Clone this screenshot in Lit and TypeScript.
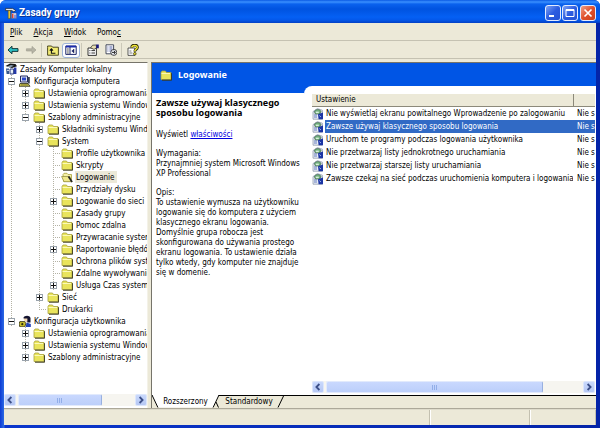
import { LitElement, html, css, svg, nothing } from 'lit';
import { customElement, property, state } from 'lit/decorators.js';
import { classMap } from 'lit/directives/class-map.js';

const folder = svg`
  <path d="M1 3.5 2 2h3.5l1 1.5H11v7H1z" fill="#e9e45c" stroke="#a8a23c" stroke-width=".8"/>
  <path d="M1.5 4.5H10" stroke="#fbf9b8"/>
  <path d="M2 11.2h9.6V4.2" fill="none" stroke="#3c3a1c" stroke-width="1"/>`;

const icons: Record<string, unknown> = {
  folder,
  open: svg`
    <path d="M2 3.5 3 2.3h3l1 1.2h3.5v7H2.5z" fill="#f4f0a6" stroke="#a8a23c" stroke-width=".8"/>
    <path d="M.6 5.5h8l2.6 5.2H3z" fill="#efe88a" stroke="#8c8636" stroke-width=".7"/>
    <path d="M7.5 5.5 11 11" stroke="#222" stroke-width="1.6"/>`,
  policy: svg`
    <path d="M.5 3 5 .6 10.5 1 12 3.2 7 5z" fill="#151515"/>
    <path d="M2 3.6 6 2l3 .8-4 1.8z" fill="#8ba0b4"/>
    <path d="M1 5.5h3V11H1.6z" fill="#38588c"/>
    <path d="M5 6h3.6v5H5z" fill="#dce8f4" stroke="#1c2c78" stroke-width=".9"/>
    <path d="M9 4.4h2.4V11H9z" fill="#2438a8"/>
    <path d="M2 7.4h2M6 8h2" stroke="#fff" stroke-width=".8"/>`,
  computer: svg`
    <path d="M1.5 1h7v6h-7z" fill="#dfe4f0" stroke="#222a60" stroke-width="1"/>
    <path d="M3 2.4h4v3H3z" fill="#2c48c8"/>
    <path d="M8.8 2h2v6.5h-2z" fill="#39404f"/>
    <path d="M1 8.5h8l2 2.8H0z" fill="#d8cf52" stroke="#2c2c1c" stroke-width=".8"/>
    <path d="M2 9.9h7" stroke="#5a5620" stroke-width=".7"/>`,
  user: svg`
    <path d="M4.4 3C5 .4 10.6-.2 11.5 3v4.4H8.6z" fill="#141430"/>
    <path d="M4.6 3.4h3.8v3.4H5.6z" fill="#f2d8b8"/>
    <path d="M7.6 7.4 11.8 9v3H6.6z" fill="#2444b8"/>
    <path d="M.8 6.6h5l1 2-1 3.2h-5L0 9z" fill="#c9c02e" stroke="#2c2a10" stroke-width=".8"/>
    <circle cx="3.3" cy="9.2" r="1.1" fill="#2c2a10"/>`,
  setting: svg`
    <path d="M1 3.6 5.4.6l5 1.6v9H1z" fill="#e8ecf4" stroke="#8492a8" stroke-width=".7"/>
    <path d="M2.4 3.8C3 1 8.2.6 9 3.6L8 6H3.4z" fill="#6fae7c" stroke="#31503c" stroke-width=".6"/>
    <path d="M3.8 3.6h3v1.6h-3z" fill="#d8f0dc"/>
    <path d="M6 6.2 11 4.4v6.8H6.6z" fill="#1c35a4"/>
    <path d="M2 7h3M2 9h3" stroke="#5872b8" stroke-width=".9"/>
    <path d="M7.4 7.6 9 9" stroke="#a8c0f4" stroke-width=".9"/>`,
  app: svg`
    <path d="M.6 1.4h7L10.6 3.4 9 5 6.8 3.6H.6z" fill="#e8e8e8" stroke="#20242c" stroke-width=".7"/>
    <path d="M3.2 3.6h2.2V11.4H3.2z" fill="#f0cf3c" stroke="#4c3c10" stroke-width=".5"/>
    <path d="M6.4 6h5.2v5.4H6.4z" fill="#fff" stroke="#24388c" stroke-width=".6"/>
    <path d="M7.8 6.8v4.2" stroke="#d03424" stroke-width="1.4"/>
    <path d="M10 7.4V11" stroke="#3050c8" stroke-width="1.2"/>`,
  back: svg`<path d="M1 6 5 2.2v2.4h6v2.8H5v2.4z" fill="#2cc0c4" stroke="#0c2c30" stroke-width=".9"/>`,
  forward: svg`<path d="M11 6 7 2.4v2.4H1.4v2.2H7v2.6z" fill="#b6b4a6" stroke="#9b998c" stroke-width=".6"/>`,
  up: svg`
    <path d="M.6 3.4V2h4l1 1.2h5.8v8H.6z" fill="#f3ec74" stroke="#3a3814" stroke-width=".9"/>
    <path d="M4.4 5.2v4h4M2.8 6.6l1.6-1.8L6 6.6" fill="none" stroke="#111" stroke-width="1.1"/>`,
  panes: svg`
    <path d="M.8 2h10.4v8.4H.8z" fill="#fff" stroke="#1c2468" stroke-width="1"/>
    <path d="M1 2.6h10" stroke="#1c2cb0" stroke-width="1.6"/>
    <path d="M5 3v7" stroke="#1c2468"/>
    <path d="M2 5h1.8M2 7h1.8M2 9h1.8M8.8 5v4" stroke="#444" stroke-width=".9"/>
    <path d="M6.4 7 9 5v4z" fill="#1c2468"/>`,
  properties: svg`
    <path d="M1 4h8.4v7.4H1z" fill="#fff" stroke="#222" stroke-width=".9"/>
    <path d="M2.4 6.6h1M4.4 6.6H8M2.4 9h1M4.4 9H8" stroke="#333" stroke-width="1"/>
    <path d="M3.6 3.8 5.6 1.2 9.4 1v3L7 5.4z" fill="#e8dfb0" stroke="#222" stroke-width=".7"/>
    <path d="M9.2.6h2.6v3.6H9.2z" fill="#17177c"/>`,
  exportList: svg`
    <path d="M1 .8h7.6v9H1z" fill="#fff" stroke="#333a50" stroke-width=".9"/>
    <path d="M2.4 3h1M4.4 3h3M2.4 5h1M4.4 5h3M2.4 7h1M4.4 7h2" stroke="#3c4c9c" stroke-width=".9"/>
    <circle cx="8.8" cy="8.4" r="3" fill="#eceef4" stroke="#222" stroke-width=".8"/>
    <path d="M7 8.4h3M8.8 6.8l1.7 1.6L8.8 10" fill="none" stroke="#111" stroke-width=".9"/>`,
  help: svg`
    <path d="M1 4h6.8v7.4H1z" fill="#fff" stroke="#333" stroke-width=".8"/>
    <path d="M2.4 7h2M2.4 9h3" stroke="#555" stroke-width=".8"/>
    <path d="M4.6 3.6C4.8.2 10.8.2 10.4 3.6 10.2 5.4 7.8 5.4 7.8 7.4" fill="none" stroke="#2c2a08" stroke-width="2.8"/>
    <path d="M4.8 3.4C5 .9 10.4.9 10.2 3.4 10 5.2 7.8 5.4 7.8 7.2" fill="none" stroke="#f4e832" stroke-width="1.5"/>
    <circle cx="7.8" cy="9.8" r="1.3" fill="#f4e832" stroke="#2c2a08" stroke-width=".7"/>`,
};

const icon = (name: string) =>
  html`<svg class="icon" viewBox="0 0 12 12" width="12" height="12" aria-hidden="true">${icons[name]}</svg>`;

interface TreeRow {
  label: string;
  icon: string;
  /** One character per indent cell: "|" guide, " " blank, "+"/"-" expander, "t" branch, "l" last branch. */
  cells: string;
  selected?: boolean;
}

const row = (cells: string, label: string, name = 'folder', selected = false): TreeRow => ({
  cells, label, icon: name, selected,
});

const TREE: TreeRow[] = [
  row('', 'Zasady Komputer lokalny', 'policy'),
  row('-', 'Konfiguracja komputera', 'computer'),
  row('|+', 'Ustawienia oprogramowania'),
  row('|+', 'Ustawienia systemu Windows'),
  row('|-', 'Szablony administracyjne'),
  row('| +', 'Składniki systemu Windows'),
  row('| -', 'System'),
  row('| |t', 'Profile użytkownika'),
  row('| |t', 'Skrypty'),
  row('| |t', 'Logowanie', 'open', true),
  row('| |t', 'Przydziały dysku'),
  row('| |+', 'Logowanie do sieci'),
  row('| |t', 'Zasady grupy'),
  row('| |t', 'Pomoc zdalna'),
  row('| |t', 'Przywracanie systemu'),
  row('| |+', 'Raportowanie błędów'),
  row('| |t', 'Ochrona plików systemu Windows'),
  row('| |t', 'Zdalne wywoływanie procedur'),
  row('| |+', 'Usługa Czas systemu Windows'),
  row('| +', 'Sieć'),
  row('| l', 'Drukarki'),
  row('-', 'Konfiguracja użytkownika', 'user'),
  row(' +', 'Ustawienia oprogramowania'),
  row(' +', 'Ustawienia systemu Windows'),
  row(' +', 'Szablony administracyjne'),
];

const SETTINGS = [
  'Nie wyświetlaj ekranu powitalnego Wprowadzenie po zalogowaniu',
  'Zawsze używaj klasycznego sposobu logowania',
  'Uruchom te programy podczas logowania użytkownika',
  'Nie przetwarzaj listy jednokrotnego uruchamiania',
  'Nie przetwarzaj starszej listy uruchamiania',
  'Zawsze czekaj na sieć podczas uruchomienia komputera i logowania',
];

const base = css`
  *, *::before, *::after { box-sizing: border-box; }
  button {
    margin: 0; padding: 0; border: 0; background: none;
    font: inherit; color: inherit; text-align: left;
  }
  .icon { display: block; flex: none; }
`;

@customElement('scroll-bar')
export class ScrollBar extends LitElement {
  @property({ type: Number }) share = 50;

  static styles = [base, css`
    :host { display: flex; height: 12px; gap: 2px; background: #f6f5f0; }
    button {
      flex: none; width: 12px; height: 12px; border-radius: 2px;
      border: 1px solid #dce6fc; background: linear-gradient(#c8d8fc, #b6c8f4);
    }
    .arrow { display: block; width: 10px; height: 10px; }
    .track { flex: 1; display: flex; }
    .thumb {
      display: flex; justify-content: center; align-items: center; gap: 1px;
      border-radius: 2px; border: 1px solid #e2eafc; border-right-color: #98b0e0;
      background: linear-gradient(#c9d8fe, #bccffa);
    }
    .grip { width: 1px; height: 5px; background: #92aee8; }
  `];

  private arrow(d: string) {
    return html`<svg class="arrow" viewBox="0 0 10 10"><path d=${d} fill="none" stroke="#3c4f88" stroke-width="1.8"/></svg>`;
  }

  render() {
    return html`
      <button aria-label="Przewiń w lewo">${this.arrow('M6.4 2 3.4 5l3 3')}</button>
      <div class="track">
        <div class="thumb" style="width:${this.share}%">
          <span class="grip"></span><span class="grip"></span><span class="grip"></span>
        </div>
      </div>
      <button aria-label="Przewiń w prawo">${this.arrow('M3.6 2l3 3-3 3')}</button>`;
  }
}

@customElement('policy-tree')
export class PolicyTree extends LitElement {
  static styles = [base, css`
    :host { display: block; overflow: hidden; }
    .row { display: flex; align-items: center; height: 12px; white-space: nowrap; }
    .cell {
      flex: none; width: 14px; height: 12px;
      display: flex; align-items: center; justify-content: center;
    }
    .guide, .node {
      background: repeating-linear-gradient(#b4b2a4 0 1px, #fff 1px 2px) 7px 0 / 1px 12px no-repeat;
    }
    .branch, .last {
      background:
        repeating-linear-gradient(90deg, #b4b2a4 0 1px, #fff 1px 2px) 7px 6px / 7px 1px no-repeat,
        repeating-linear-gradient(#b4b2a4 0 1px, #fff 1px 2px) 7px 0 / 1px 12px no-repeat;
    }
    .last { background-size: 7px 1px, 1px 6px; }
    .expander {
      flex: none; display: block; width: 7px; height: 7px; margin-left: 1px;
      border: 1px solid #9aa3ac; background: #fff;
    }
    .expander svg { display: block; }
    .label { padding: 0 2px 0 1px; height: 12px; line-height: 13px; }
    .icon { margin: 0 2px 0 1px; }
    .selected { background: #ece9d8; }
  `];

  private cell(c: string) {
    if (c === '+' || c === '-') {
      return html`<span class="cell node"><button class="expander" aria-label=${c === '+' ? 'Rozwiń' : 'Zwiń'}>
        <svg width="5" height="5" viewBox="0 0 5 5"><path d=${c === '+' ? 'M0 2.5h5M2.5 0v5' : 'M0 2.5h5'} stroke="#111"/></svg>
      </button></span>`;
    }
    const kind = { guide: c === '|', branch: c === 't', last: c === 'l' };
    return html`<span class="cell ${classMap(kind)}"></span>`;
  }

  render() {
    return html`<div role="tree" aria-label="Zasady">${TREE.map((r) => html`
      <div class="row" role="treeitem" aria-selected=${r.selected ? 'true' : 'false'}>
        ${[...r.cells].map((c) => this.cell(c))}
        ${icon(r.icon)}
        <span class="label ${classMap({ selected: !!r.selected })}">${r.label}</span>
      </div>`)}</div>`;
  }
}

@customElement('app-root')
export class AppRoot extends LitElement {
  @state() private current = 1;

  static styles = [base, css`
    :host {
      display: flex; flex-direction: column; min-height: 100vh; box-sizing: border-box;
      padding: 0 4px 3px; border-radius: 6px 6px 0 0; overflow: hidden;
      background: linear-gradient(90deg, #0c3ad4, #2c6ae4 4px, #0a36cc 5px, #0424a8);
      color: #000; font: 8px/10px "DejaVu Sans Condensed", "DejaVu Sans", sans-serif;
    }
    .titlebar {
      display: flex; align-items: center; height: 23px; flex: none;
      margin: 0 -4px; padding: 2px 4px 0 5px; color: #fff;
      background: linear-gradient(#0a5ae4, #3a90ff 2px, #0a62ee 4px, #0053e0 9px, #0560f4 17px, #0458ea 20px, #0340c4);
    }
    .titlebar h1 {
      flex: 1; margin: 0 0 0 2px;
      font: bold 10px/14px Roboto, "Noto Sans", sans-serif; text-shadow: 1px 1px #0a3494;
    }
    .controls { display: flex; gap: 1px; }
    .control {
      width: 16px; height: 16px; border: 1px solid #e4ecff; border-radius: 3px;
      background: linear-gradient(135deg, #7ea2f4, #2c5ce0 50%, #2452d4);
    }
    .control svg { display: block; }
    .close { background: linear-gradient(135deg, #f0a088, #e0502c 50%, #c8401c); margin-left: 1px; }

    .menubar, .toolbar {
      display: flex; align-items: center; height: 18px; flex: none;
      background: #ece9d8; border-bottom: 1px solid #c5c2b2;
    }
    .menubar { gap: 11px; padding: 2px 6px 0; }
    .toolbar { padding: 1px 0 0; }
    .tool { display: flex; align-items: center; justify-content: center; width: 18px; height: 15px; flex: none; }
    .tool.on { background: #fdfdff; border: 1px solid #9db2d8; border-radius: 3px; }
    .sep { width: 1px; height: 14px; background: #cbc8b8; margin: 0 2px 0 1px; }

    .body {
      flex: 1; display: grid; grid-template-columns: 144px minmax(0, 1fr); column-gap: 3px;
      padding-top: 3px; background: #ece9d8; border-bottom: 1px solid #aca899;
    }
    .left {
      display: flex; flex-direction: column; background: #fff; min-width: 0;
      border-top: 1px solid #76746a; border-right: 1px solid #f4f2e8; padding-bottom: 2px;
    }
    policy-tree { flex: 1; }
    .right {
      display: flex; flex-direction: column; min-width: 0;
      border-top: 1px solid #76746a; border-left: 1px solid #76746a;
    }
    .banner {
      display: flex; align-items: center; gap: 6px; height: 23px; flex: none; padding: 0 8px;
      background: #0055e5; color: #fff;
    }
    .banner h2 { margin: 0; font: bold 9px/12px "Noto Sans", sans-serif; }
    .content { flex: 1; display: grid; grid-template-columns: 152px minmax(0, 1fr); background: #0055e5; }
    .info { margin-top: 7px; padding: 5px 0 0 4px; background: #fff; white-space: nowrap; overflow: hidden; }
    .info h3 { margin: 0 0 12px; font: bold 9px/10px "Noto Sans", sans-serif; }
    .info p { margin: 0 0 9px; }
    .info a { color: #0000e0; }
    .list {
      display: flex; flex-direction: column; background: #fff; min-width: 0;
      border-top-left-radius: 8px; padding: 8px 1px 2px 8px;
    }
    .tablebox { flex: 1; overflow: hidden; }
    table { width: 100%; border-collapse: collapse; table-layout: fixed; }
    th, td { padding: 0; height: 13px; text-align: left; font-weight: normal; white-space: nowrap; overflow: hidden; }
    th { height: 12px; background: #ece9d8; border-bottom: 1px solid #8c897a; padding: 1px 0 0 4px; }
    th.state { border-left: 1px solid #8c897a; width: 22px; }
    tbody::before { content: ""; display: table-row; height: 1px; }
    .name { display: flex; align-items: center; height: 13px; }
    .name button { flex: 1; height: 13px; margin-left: 1px; padding-left: 1px; line-height: 13px; white-space: nowrap; }
    td.state { padding-left: 4px; }
    .chosen button, .chosen .state { background: #316ac5; color: #fff; }

    .tabs { display: flex; height: 13px; flex: none; background: #ece9d8; border-top: 1px solid #000; }
    .tab {
      display: flex; align-items: center; justify-content: center;
      height: 13px; margin-top: -1px; position: relative; width: 67px;
    }
    .tab.second { margin-left: -5px; width: 70px; }
    .tab svg { position: absolute; inset: 0; width: 100%; height: 100%; }
    .tab span { position: relative; padding-top: 1px; }

    .status {
      display: flex; height: 16px; flex: none; background: #ece9d8; border-top: 1px solid #dedbcb;
    }
    .status div { width: 100px; border-left: 1px solid #fff; border-right: 1px solid #c3c0b0; }
    .status .message { flex: 1; border-left: 0; }
    .status .end { width: 66px; }
  `];

  private menu(pre: string, key: string, post: string) {
    return html`<button role="menuitem">${pre}<u>${key}</u>${post}</button>`;
  }

  render() {
    return html`
      <header class="titlebar">
        ${icon('app')}
        <h1>Zasady grupy</h1>
        <div class="controls">
          <button class="control" aria-label="Minimalizuj"><svg width="14" height="14"><path d="M3 10h5" stroke="#fff" stroke-width="2"/></svg></button>
          <button class="control" aria-label="Maksymalizuj"><svg width="14" height="14"><path d="M3 3.5h8v7H3zM3 4.5h8" fill="none" stroke="#fff"/></svg></button>
          <button class="control close" aria-label="Zamknij"><svg width="14" height="14"><path d="m3.5 3.5 7 7m0-7-7 7" stroke="#fff" stroke-width="1.7"/></svg></button>
        </div>
      </header>
      <nav class="menubar" role="menubar">
        ${this.menu('', 'P', 'lik')}${this.menu('', 'A', 'kcja')}${this.menu('', 'W', 'idok')}${this.menu('Pomo', 'c', '')}
      </nav>
      <div class="toolbar" role="toolbar">
        <button class="tool" aria-label="Wstecz">${icon('back')}</button>
        <button class="tool" aria-label="Dalej" disabled>${icon('forward')}</button>
        <span class="sep"></span>
        <button class="tool" aria-label="W górę">${icon('up')}</button>
        <button class="tool on" aria-label="Drzewo konsoli" aria-pressed="true">${icon('panes')}</button>
        <span class="sep"></span>
        <button class="tool" aria-label="Właściwości">${icon('properties')}</button>
        <button class="tool" aria-label="Eksportuj listę">${icon('exportList')}</button>
        <span class="sep"></span>
        <button class="tool" aria-label="Pomoc">${icon('help')}</button>
      </div>
      <main class="body">
        <section class="left">
          <policy-tree></policy-tree>
          <scroll-bar .share=${73}></scroll-bar>
        </section>
        <section class="right">
          <div class="banner">${icon('folder')}<h2>Logowanie</h2></div>
          <div class="content">
            <article class="info">
              <h3>Zawsze używaj klasycznego<br>sposobu logowania</h3>
              <p>Wyświetl <a href="#properties">właściwości</a></p>
              <p>Wymagania:<br>Przynajmniej system Microsoft Windows<br>XP Professional</p>
              <p>Opis:<br>To ustawienie wymusza na użytkowniku<br>logowanie się do komputera z użyciem<br>klasycznego ekranu logowania.<br>Domyślnie grupa robocza jest<br>skonfigurowana do używania prostego<br>ekranu logowania. To ustawienie działa<br>tylko wtedy, gdy komputer nie znajduje<br>się w domenie.</p>
            </article>
            <div class="list">
              <div class="tablebox">
                <table>
                  <thead><tr><th>Ustawienie</th><th class="state" aria-label="Stan"></th></tr></thead>
                  <tbody>${SETTINGS.map((name, i) => html`
                    <tr class=${i === this.current ? 'chosen' : nothing}>
                      <td><div class="name">${icon('setting')}<button @click=${() => (this.current = i)}>${name}</button></div></td>
                      <td class="state">Nie s</td>
                    </tr>`)}
                  </tbody>
                </table>
              </div>
              <scroll-bar .share=${85}></scroll-bar>
            </div>
          </div>
          <div class="tabs" role="tablist">
            <button class="tab" role="tab" aria-selected="true">
              <svg viewBox="0 0 68 13" preserveAspectRatio="none"><path d="M0 0 6 12.5h56L68 0z" fill="#fff"/><path d="M0 0 6 12.5M62 12.5 68 0" stroke="#000" fill="none"/></svg>
              <span>Rozszerzony</span>
            </button>
            <button class="tab second" role="tab" aria-selected="false">
              <svg viewBox="0 0 70 13" preserveAspectRatio="none"><path d="m2 7 2.5 5.5M64 12.5 70 0" stroke="#000" fill="none"/></svg>
              <span>Standardowy</span>
            </button>
          </div>
        </section>
      </main>
      <footer class="status"><div class="message"></div><div></div><div class="end"></div></footer>`;
  }
}
